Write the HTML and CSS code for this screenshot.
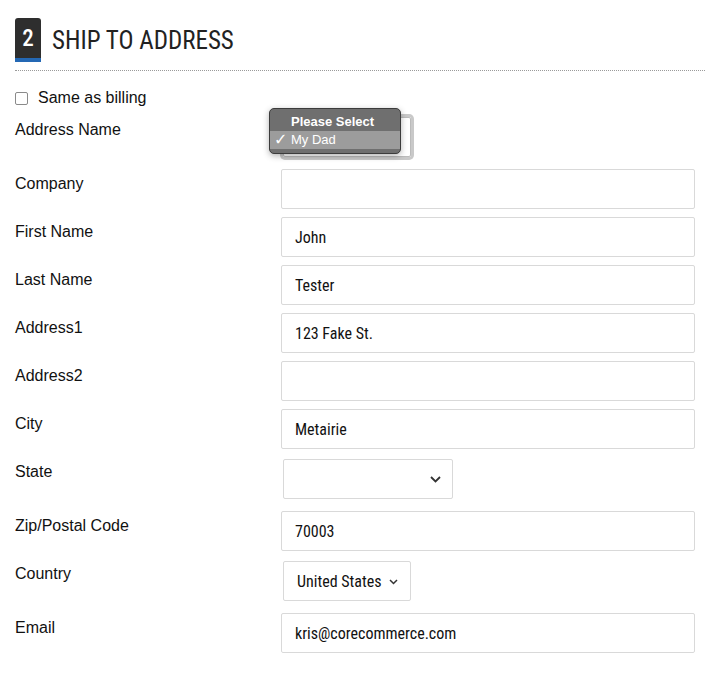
FILE: index.html
```html
<!DOCTYPE html>
<html>
<head>
<meta charset="utf-8">
<link rel="stylesheet" href="styles.css">
</head>
<body>
<div class="page">
  <div class="section-head">
    <span class="badge">2</span>
    <h2 class="title">SHIP TO ADDRESS</h2>
  </div>
  <label class="check-row"><span class="checkbox"></span><span>Same as billing</span></label>
  <div class="form">
    <div class="row">
      <div class="label">Address Name</div>
      <div class="field">
        <div class="select select-focus"></div>
        <div class="popup">
          <div class="popup-item popup-head">Please Select</div>
          <div class="popup-item popup-sel"><span class="tick">✓</span>My Dad</div>
        </div>
      </div>
    </div>
    <div class="row">
      <div class="label">Company</div>
      <div class="field"><div class="input"></div></div>
    </div>
    <div class="row">
      <div class="label">First Name</div>
      <div class="field"><div class="input">John</div></div>
    </div>
    <div class="row">
      <div class="label">Last Name</div>
      <div class="field"><div class="input">Tester</div></div>
    </div>
    <div class="row">
      <div class="label">Address1</div>
      <div class="field"><div class="input">123 Fake St.</div></div>
    </div>
    <div class="row">
      <div class="label">Address2</div>
      <div class="field"><div class="input"></div></div>
    </div>
    <div class="row">
      <div class="label">City</div>
      <div class="field"><div class="input">Metairie</div></div>
    </div>
    <div class="row">
      <div class="label">State</div>
      <div class="field">
        <div class="select select-state">
          <svg class="chev chev-lg" width="11" height="7" viewBox="0 0 11 7"><path d="M1 1l4.5 4.5L10 1" fill="none" stroke="#333" stroke-width="1.8"/></svg>
        </div>
      </div>
    </div>
    <div class="row">
      <div class="label">Zip/Postal Code</div>
      <div class="field"><div class="input">70003</div></div>
    </div>
    <div class="row">
      <div class="label">Country</div>
      <div class="field">
        <div class="select select-country">United States
          <svg class="chev chev-sm" width="9" height="6" viewBox="0 0 9 6"><path d="M1 1l3.5 3.5L8 1" fill="none" stroke="#333" stroke-width="1.5"/></svg>
        </div>
      </div>
    </div>
    <div class="row">
      <div class="label">Email</div>
      <div class="field"><div class="input">kris@corecommerce.com</div></div>
    </div>
  </div>
</div>
</body>
</html>
```
FILE: styles.css
```css
html, body { margin: 0; padding: 0; background: #fff; }
body { font-family: "Liberation Sans", Arial, sans-serif; color: #111; }
.page { width: 690px; padding: 18px 17px 0 15px; }
.section-head {
  display: flex; align-items: center;
  padding-bottom: 8px;
  border-bottom: 1px dotted #9a9a9a;
}
.badge {
  width: 26px; height: 40px;
  background: #2e2e2e; color: #fff;
  border-bottom: 4px solid #2468b4;
  border-radius: 3px 3px 0 0;
  font-family: Roboto, sans-serif; font-weight: 500;
  font-size: 23px; font-stretch: 80%;
  display: flex; align-items: center; justify-content: center;
  line-height: 1;
}
.title {
  margin: 0 0 0 11px;
  font-family: Roboto, sans-serif; font-weight: 400;
  font-size: 25px; font-stretch: 77%;
  color: #222; letter-spacing: 0;
}
.check-row {
  display: flex; align-items: center; gap: 10px;
  margin-top: 18px; font-size: 16px; line-height: 18px;
}
.checkbox {
  width: 11px; height: 11px; border: 1px solid #8a8a8a; border-radius: 2px; background: #fff;
}
.form { display: flex; flex-direction: column; gap: 8px; margin-top: 8px; padding-right: 10px; }
.row { display: flex; }
.label { width: 266px; flex: none; font-size: 16px; line-height: 20px; padding-top: 5px; }
.field { flex: 1; position: relative; }
.input {
  height: 38px; border: 1px solid #d9d9d9; border-radius: 2px;
  padding: 0 13px; line-height: 40px;
  font-family: Roboto, sans-serif; font-size: 16px; font-stretch: 85%;
  color: #111;
}
.select {
  position: relative; box-sizing: border-box;
  height: 40px; margin: 2px 0 4px 2px;
  border: 1px solid #d9d9d9; border-radius: 2px;
  font-family: Roboto, sans-serif; font-size: 16px; font-stretch: 85%;
  line-height: 40px; color: #111;
}
.select-focus { width: 128px; box-shadow: 0 0 0 3px #c9c9c9; border-color: #bbb; }
.select-state { width: 170px; }
.select-country { width: 128px; padding-left: 13px; }
.chev { position: absolute; top: 50%; }
.chev-lg { right: 11px; margin-top: -3px; }
.chev-sm { right: 12px; margin-top: -2px; }
.popup {
  position: absolute; left: -12px; top: -7px;
  width: 132px; box-sizing: border-box;
  background: #6f6f6f; border: 1px solid #3c3c3c; border-radius: 5px;
  box-shadow: 0 2px 6px rgba(0,0,0,0.3);
  padding: 4px 0 4px;
  font-family: "Liberation Sans", Arial, sans-serif; font-size: 13px; color: #fff;
}
.popup-item { height: 18px; line-height: 18px; padding-left: 21px; position: relative; }
.popup-head { font-weight: bold; background: #6f6f6f; }
.popup-sel { background: #9c9c9c; }
.tick { position: absolute; left: 4px; top: 0; font-size: 16px; font-family: "DejaVu Sans", sans-serif; }
```
